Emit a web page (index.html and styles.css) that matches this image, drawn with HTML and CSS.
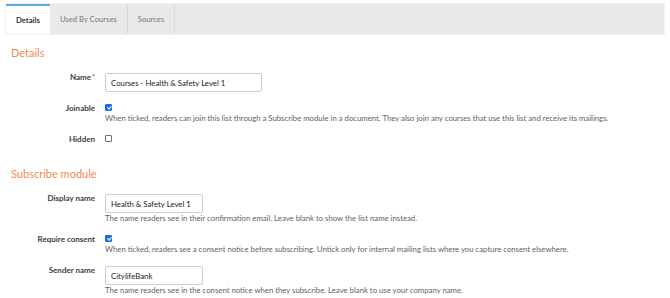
FILE: index.html
```html
<!DOCTYPE html>
<html lang="en">
<head>
    <meta charset="UTF-8">
    <meta name="viewport" content="width=device-width, initial-scale=1.0">
    <title>Mailing list - Details</title>
    <link rel="stylesheet" href="styles.css">
</head>
<body>
    <div class="tabs">
        <div class="tab active">Details</div>
        <div class="tab">Used By Courses</div>
        <div class="tab">Sources</div>
    </div>

    <div class="content">
        <h2>Details</h2>
        <div class="form">
            <label class="field-label" for="name">Name<span class="req">*</span></label>
            <div class="field">
                <input type="text" id="name" class="wide" value="Courses - Health &amp; Safety Level 1">
            </div>

            <label class="field-label" for="joinable">Joinable</label>
            <div class="field">
                <input type="checkbox" id="joinable" checked>
                <div class="help">When ticked, readers can join this list through a Subscribe module in a document. They also join any courses that use this list and receive its mailings.</div>
            </div>

            <label class="field-label" for="hidden">Hidden</label>
            <div class="field">
                <input type="checkbox" id="hidden">
            </div>
        </div>

        <h2 class="second">Subscribe module</h2>
        <div class="form">
            <label class="field-label" for="displayName">Display name</label>
            <div class="field">
                <input type="text" id="displayName" value="Health &amp; Safety Level 1">
                <div class="help">The name readers see in their confirmation email. Leave blank to show the list name instead.</div>
            </div>

            <label class="field-label" for="consent">Require consent</label>
            <div class="field">
                <input type="checkbox" id="consent" checked>
                <div class="help">When ticked, readers see a consent notice before subscribing. Untick only for internal mailing lists where you capture consent elsewhere.</div>
            </div>

            <label class="field-label" for="senderName">Sender name</label>
            <div class="field">
                <input type="text" id="senderName" value="CitylifeBank">
                <div class="help">The name readers see in the consent notice when they subscribe. Leave blank to use your company name.</div>
            </div>
        </div>
    </div>
</body>
</html>
```

FILE: styles.css
```css
body {
    font-family: Lato, "Open Sans", Arial, sans-serif;
    font-size: 7.75px;
    line-height: 9px;
    margin: 0;
    padding: 3px 5px 0 5px;
    background-color: #ffffff;
    color: #444444;
}

.tabs {
    display: flex;
    height: 32px;
    background-color: #e9e9e9;
    border: 1px solid #f2f2f2;
    box-sizing: border-box;
}

.tab {
    display: flex;
    align-items: center;
    padding: 0 10px;
    font-size: 7.7px;
    color: #777777;
    border-right: 1px solid #d9d9d9;
}

.tab.active {
    background-color: #ffffff;
    color: #333333;
    font-weight: bold;
    border-top: 2px solid #5aaae8;
    border-right: none;
}

.content {
    padding: 0 6px;
}

h2 {
    font-size: 11px;
    line-height: 14px;
    font-weight: normal;
    color: #ec8b4e;
    margin: 11px 0 13px;
}

h2.second {
    margin-top: 23px;
}

.form {
    display: grid;
    grid-template-columns: 84px 1fr;
    column-gap: 10px;
    row-gap: 12px;
}

.field-label {
    text-align: right;
    font-size: 8px;
    font-weight: bold;
    color: #3d3d3d;
}

.req {
    color: #e0504a;
    font-size: 7px;
    vertical-align: top;
    margin-left: 1px;
}

input[type="text"] {
    display: block;
    font-family: inherit;
    font-size: 7.8px;
    color: #222222;
    width: 98px;
    height: 19px;
    padding: 0 5px;
    margin: 0;
    border: 1px solid #cccccc;
    border-radius: 2px;
    box-sizing: border-box;
}

input[type="text"].wide {
    width: 157px;
}

input[type="checkbox"] {
    appearance: none;
    -webkit-appearance: none;
    position: relative;
    display: block;
    width: 7px;
    height: 7px;
    margin: 0;
    border: 1px solid #6f6f6f;
    border-radius: 1px;
    box-sizing: border-box;
    background-color: #ffffff;
}

input[type="checkbox"]:checked {
    background-color: #1a6fe0;
    border-color: #1a6fe0;
}

input[type="checkbox"]:checked::after {
    content: "";
    position: absolute;
    left: 1.5px;
    top: 0;
    width: 1.5px;
    height: 3px;
    border: solid #ffffff;
    border-width: 0 1px 1px 0;
    transform: rotate(45deg);
}

.help {
    margin-top: 3px;
    color: #5f5f5f;
}

input[type="text"] + .help {
    margin-top: 1px;
}
```
